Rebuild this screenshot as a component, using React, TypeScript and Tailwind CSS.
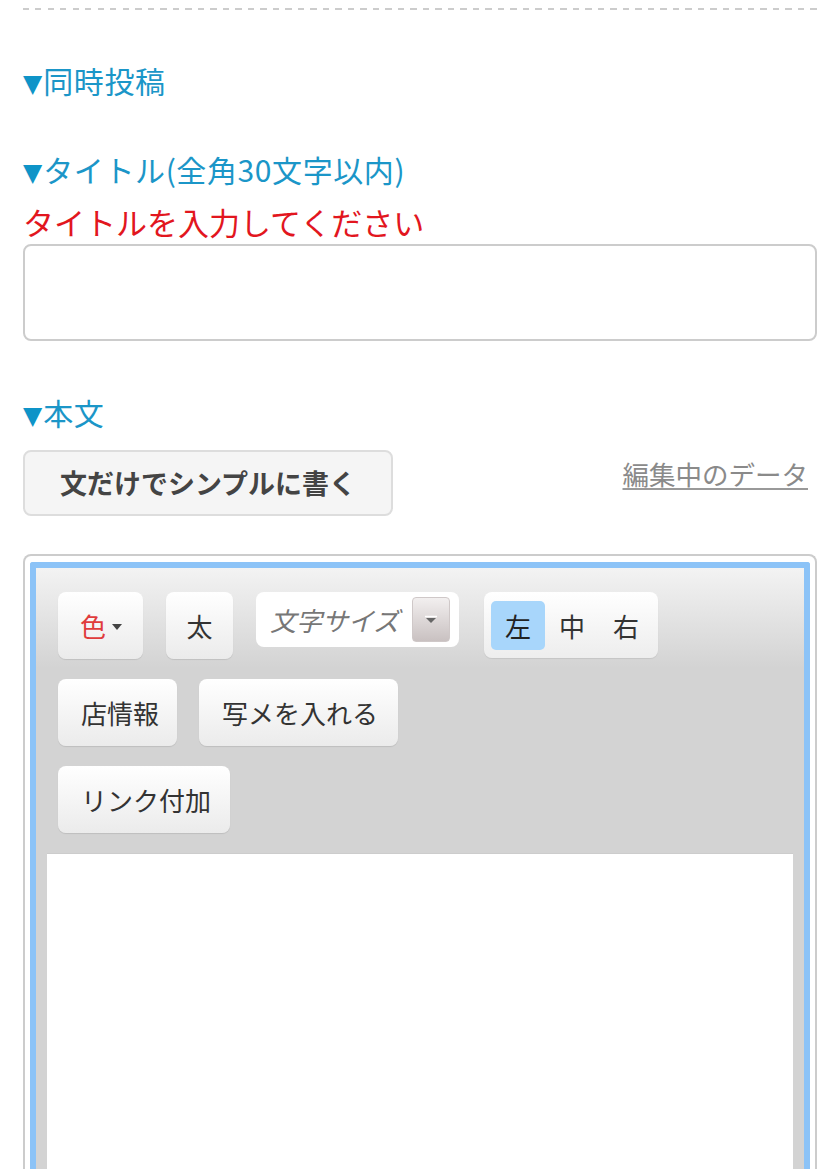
import React from "react";

function Tri() {
  return (
    <span className="[font-family:'DejaVu_Sans',sans-serif] text-[25px] text-[#0e94c8] mr-[1px] align-[1px] tracking-normal">▼</span>
  );
}

function Heading({ children, className = "" }: { children: React.ReactNode; className?: string }) {
  return (
    <div className={"h-[40px] leading-[36px] text-[30px] tracking-[0.6px] text-[#1b96c8] whitespace-nowrap " + className}>
      <Tri />
      {children}
    </div>
  );
}

const btn =
  "h-[67px] rounded-[8px] bg-[linear-gradient(to_bottom,#ffffff,#ebebeb)] shadow-[0_1px_1px_rgba(0,0,0,0.10)] text-[26px] text-[#333333] flex items-center whitespace-nowrap";

export default function App() {
  return (
    <div className="w-[840px] min-h-[1169px] bg-white px-[23px] pt-[8px] [font-family:'Noto_Sans_CJK_JP','Noto_Sans',sans-serif]">
      <div className="h-[2px] bg-[repeating-linear-gradient(to_right,#cccccc_0px,#cccccc_6px,transparent_6px,transparent_12.5px)]" />

      <Heading className="mt-[52px]">同時投稿</Heading>
      <Heading className="mt-[49px]">タイトル(全角30文字以内)</Heading>

      <div className="mt-[13px] h-[40px] leading-[36px] text-[31px] text-[#e2161e] whitespace-nowrap">
        タイトルを入力してください
      </div>
      <div className="h-[97px] rounded-[8px] border-2 border-[#cccccc] bg-white" />

      <Heading className="mt-[53px]">本文</Heading>

      <div className="mt-[16px] flex items-start justify-between">
        <div className="w-[370px] h-[66px] rounded-[8px] border-2 border-[#dddddd] bg-[#f5f5f5] flex items-center justify-center text-[27px] font-bold text-[#444444] whitespace-nowrap">
          文だけでシンプルに書く
        </div>
        <div className="mt-[6px] mr-[9px] leading-[36px] text-[26.5px] text-[#8a8a8a] underline underline-offset-[3px] decoration-[#999999] whitespace-nowrap">
          編集中のデータ
        </div>
      </div>

      <div className="mt-[38px] rounded-t-[8px] border-2 border-b-0 border-[#cccccc] px-[5px] pt-[6px]">
        <div className="border-[6px] border-b-0 border-[#8cc3f7] rounded-t-[3px]">
          <div className="bg-[linear-gradient(to_bottom,#f3f3f3,#d3d3d3_100px)] px-[11px] pt-[24px]">
            <div className="flex flex-col gap-[20px] pl-[11px]">
              <div className="flex items-start gap-[23px]">
                <div className={btn + " w-[85px] pl-[22px]"}>
                  <span className="text-[#e03c3c]">色</span>
                  <svg width="12" height="8" viewBox="0 0 12 8" className="ml-[5px] mt-[2px]">
                    <path d="M1 1 H11 L6 7 Z" fill="#444444" />
                  </svg>
                </div>
                <div className={btn + " w-[67px] justify-center"}>太</div>
                <div className="w-[203px] h-[55px] rounded-[8px] bg-white flex items-center pl-[14px] pr-[9px] justify-between">
                  <span className="italic text-[26px] text-[#777777] whitespace-nowrap">文字サイズ</span>
                  <div className="w-[38px] h-[45px] rounded-[4px] border border-[#cfc8c8] bg-[linear-gradient(to_bottom,#f2efef,#c9c1c1)] flex items-center justify-center">
                    <svg width="16" height="12" viewBox="0 0 16 12">
                      <path d="M2 2.5 H14" stroke="#ffffff" strokeWidth="1.5" />
                      <path d="M3 4 H13 L8 9 Z" fill="#666666" />
                    </svg>
                  </div>
                </div>
                <div className="ml-[2px] h-[66px] rounded-[8px] bg-[linear-gradient(to_bottom,#ffffff,#ededed)] shadow-[0_1px_1px_rgba(0,0,0,0.08)] flex items-center pl-[7px] pr-[5px]">
                  <div className="w-[54px] h-[49px] rounded-[5px] bg-[#a8d6fb] flex items-center justify-center text-[26px] text-[#222222]">左</div>
                  <div className="w-[54px] h-[49px] flex items-center justify-center text-[26px] text-[#333333]">中</div>
                  <div className="w-[54px] h-[49px] flex items-center justify-center text-[26px] text-[#333333]">右</div>
                </div>
              </div>
              <div className="flex items-start gap-[22px]">
                <div className={btn + " w-[119px] pl-[23px]"}>店情報</div>
                <div className={btn + " w-[199px] pl-[23px]"}>写メを入れる</div>
              </div>
              <div className="flex items-start">
                <div className={btn + " w-[172px] pl-[23px]"}>リンク付加</div>
              </div>
            </div>
            <div className="mt-[20px] h-[420px] bg-white border-t border-[#cccccc]" />
          </div>
        </div>
      </div>
    </div>
  );
}
